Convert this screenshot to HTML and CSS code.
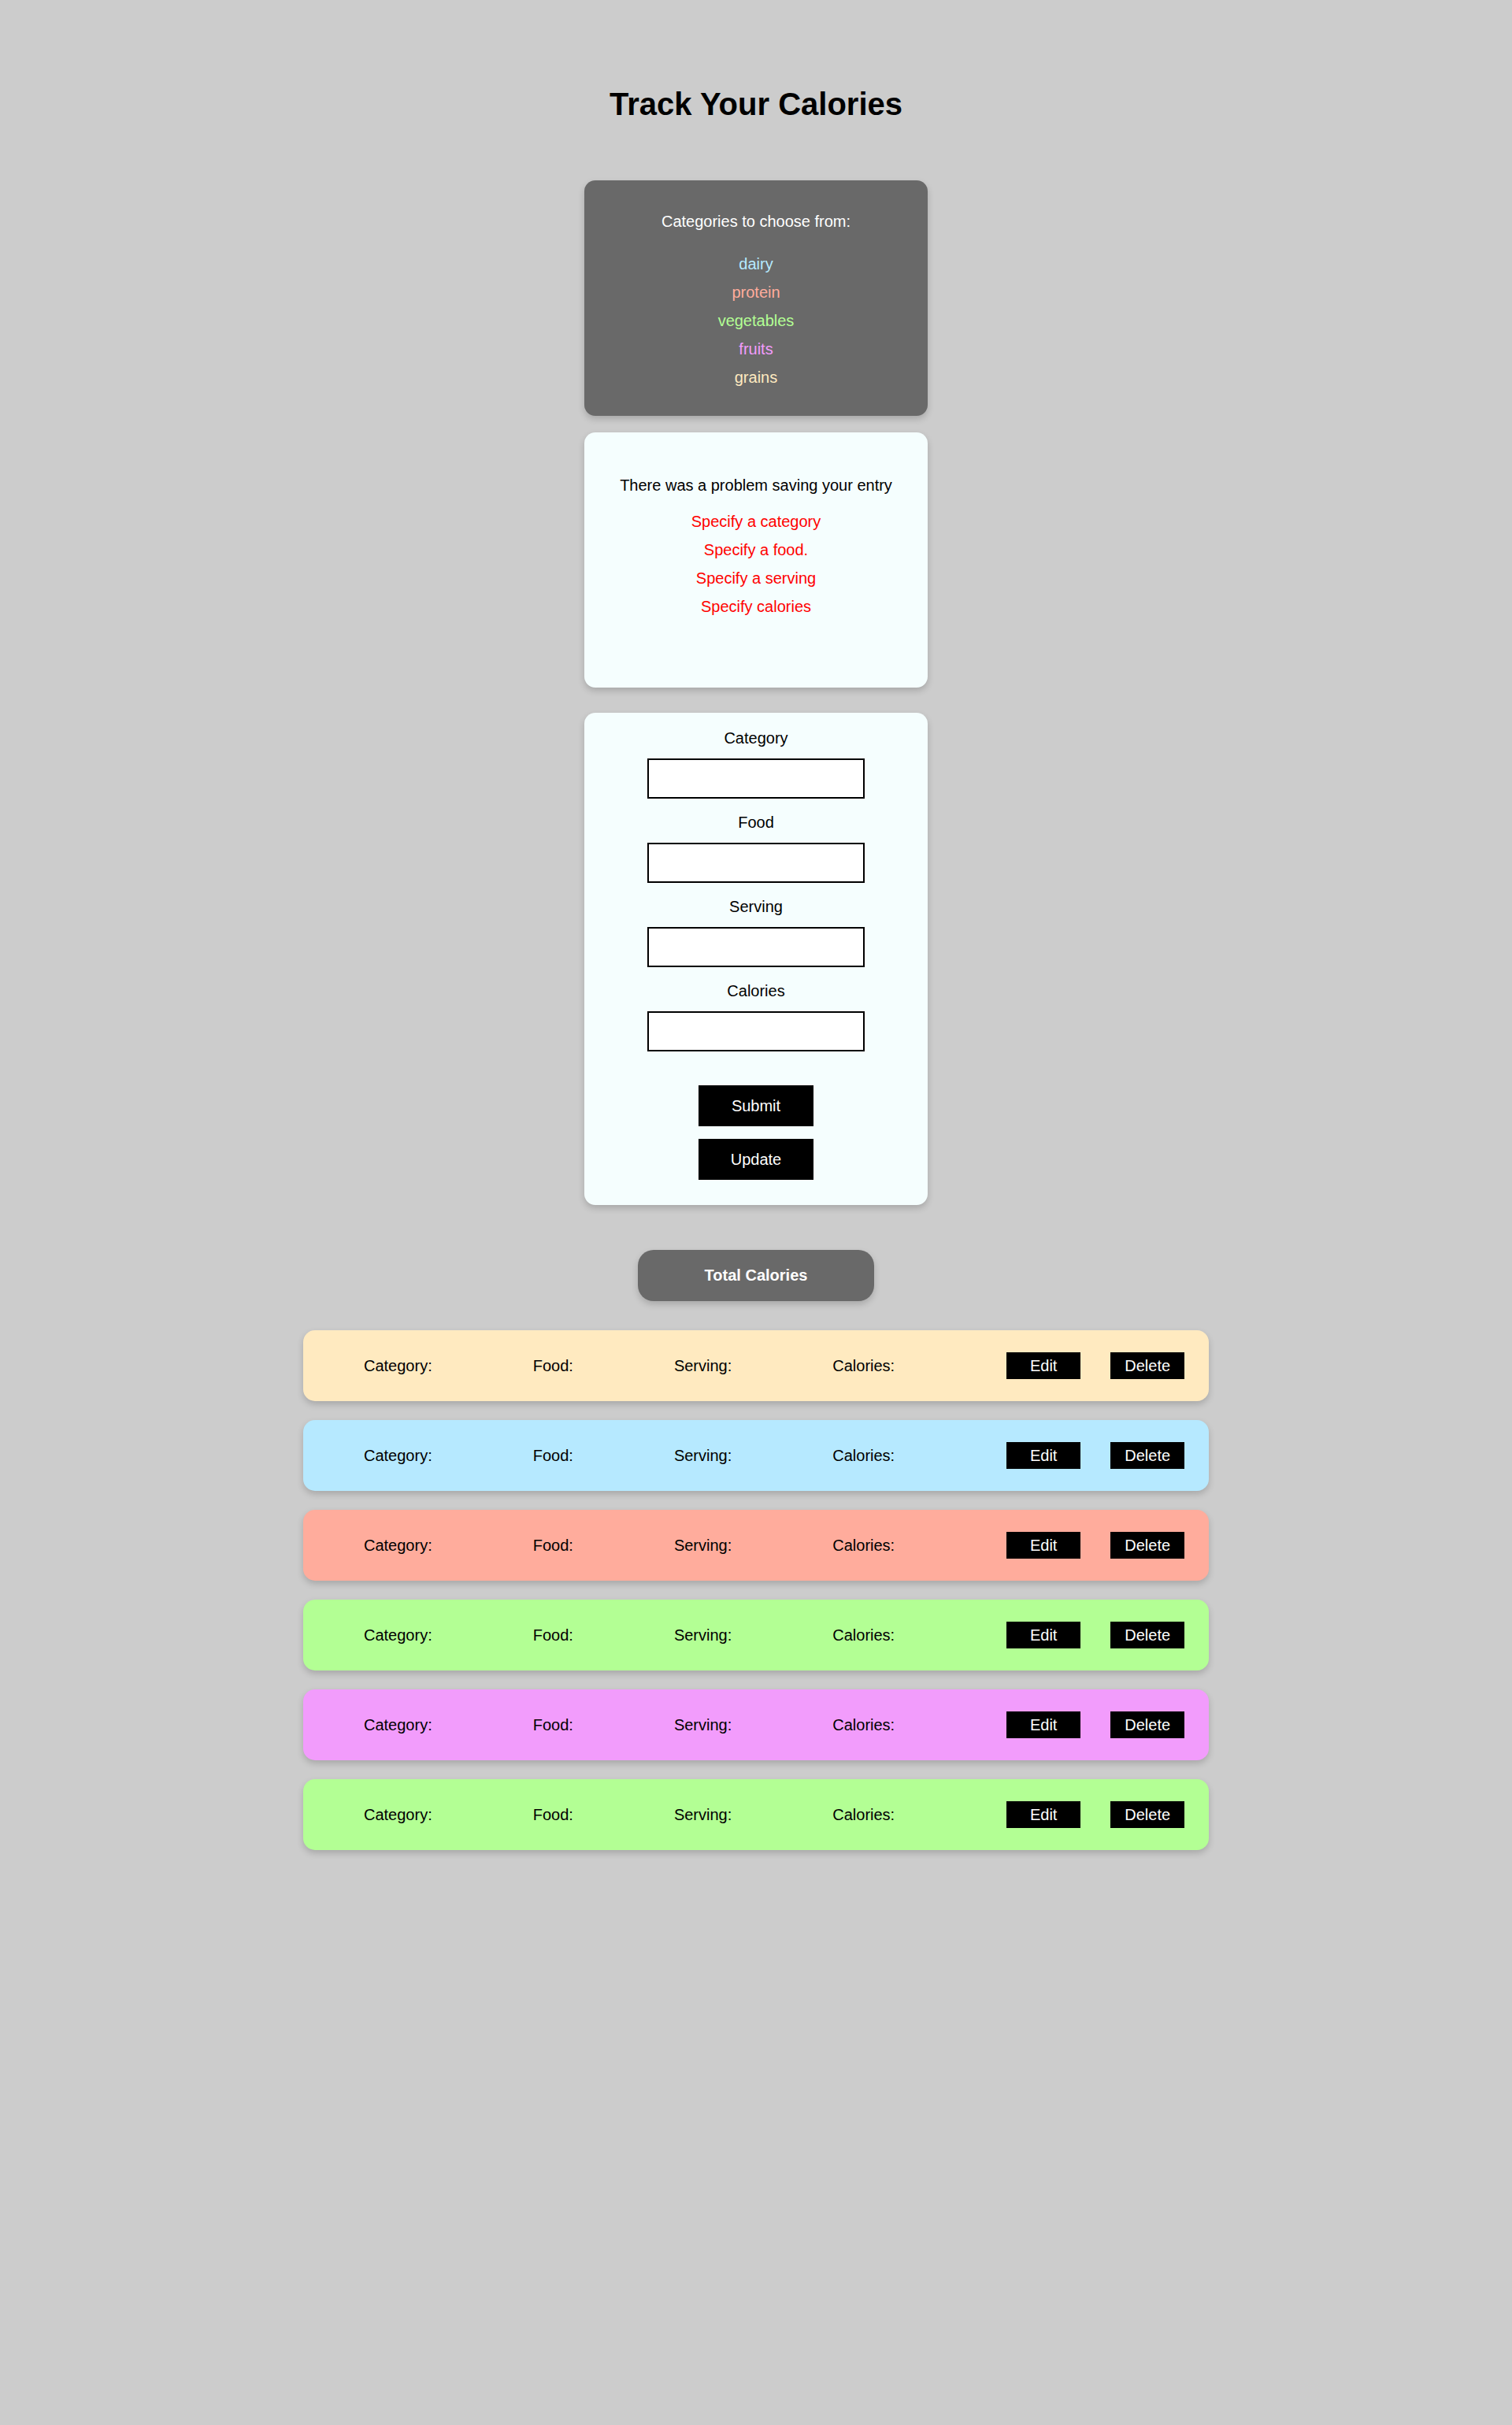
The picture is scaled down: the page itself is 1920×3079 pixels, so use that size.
FILE: index.html
```html
<!DOCTYPE html>
<html lang="en">
<head>
    <meta charset="UTF-8">
    <meta name="viewport" content="width=device-width, initial-scale=1.0">
    <title>Calorie Tracker</title>
    <link rel="stylesheet" href="styles.css">
</head>
<body>
    <h1 class="title">Track Your Calories</h1>

    <div class="card categories">
        <p class="card-heading">Categories to choose from:</p>
        <ul class="category-list">
            <li class="dairy-text">dairy</li>
            <li class="protein-text">protein</li>
            <li class="vegetables-text">vegetables</li>
            <li class="fruits-text">fruits</li>
            <li class="grains-text">grains</li>
        </ul>
    </div>

    <div class="card errors">
        <p class="card-heading">There was a problem saving your entry</p>
        <ul class="error-list">
            <li>Specify a category</li>
            <li>Specify a food.</li>
            <li>Specify a serving</li>
            <li>Specify calories</li>
        </ul>
    </div>

    <form class="card entry-form" id="entryForm">
        <label for="category">Category</label>
        <input type="text" id="category" name="category">

        <label for="food">Food</label>
        <input type="text" id="food" name="food">

        <label for="serving">Serving</label>
        <input type="text" id="serving" name="serving">

        <label for="calories">Calories</label>
        <input type="text" id="calories" name="calories">

        <button type="submit" class="form-btn submit-btn">Submit</button>
        <button type="button" class="form-btn">Update</button>
    </form>

    <div class="total">Total Calories</div>

    <div class="entries">
        <div class="entry grains">
            <span>Category:</span>
            <span>Food:</span>
            <span>Serving:</span>
            <span>Calories:</span>
            <div class="actions">
                <button class="row-btn">Edit</button>
                <button class="row-btn">Delete</button>
            </div>
        </div>
        <div class="entry dairy">
            <span>Category:</span>
            <span>Food:</span>
            <span>Serving:</span>
            <span>Calories:</span>
            <div class="actions">
                <button class="row-btn">Edit</button>
                <button class="row-btn">Delete</button>
            </div>
        </div>
        <div class="entry protein">
            <span>Category:</span>
            <span>Food:</span>
            <span>Serving:</span>
            <span>Calories:</span>
            <div class="actions">
                <button class="row-btn">Edit</button>
                <button class="row-btn">Delete</button>
            </div>
        </div>
        <div class="entry vegetables">
            <span>Category:</span>
            <span>Food:</span>
            <span>Serving:</span>
            <span>Calories:</span>
            <div class="actions">
                <button class="row-btn">Edit</button>
                <button class="row-btn">Delete</button>
            </div>
        </div>
        <div class="entry fruits">
            <span>Category:</span>
            <span>Food:</span>
            <span>Serving:</span>
            <span>Calories:</span>
            <div class="actions">
                <button class="row-btn">Edit</button>
                <button class="row-btn">Delete</button>
            </div>
        </div>
        <div class="entry vegetables">
            <span>Category:</span>
            <span>Food:</span>
            <span>Serving:</span>
            <span>Calories:</span>
            <div class="actions">
                <button class="row-btn">Edit</button>
                <button class="row-btn">Delete</button>
            </div>
        </div>
    </div>
</body>
</html>
```

FILE: styles.css
```css
body {
    margin: 0;
    padding-bottom: 40px;
    background-color: #cccccc;
    font-family: "Liberation Sans", Arial, sans-serif;
    font-size: 20px;
    line-height: 24px;
    color: #000;
    text-align: center;
}
.title {
    margin: 108px 0 73px;
    font-size: 40px;
    line-height: 48px;
    font-weight: bold;
}
.card {
    width: 436px;
    margin: 0 auto;
    box-sizing: border-box;
    border-radius: 14px;
    box-shadow: 0 4px 8px rgba(0, 0, 0, 0.18);
}
.card-heading {
    margin: 0;
}
ul {
    list-style: none;
    margin: 0;
    padding: 0;
}
li {
    line-height: 36px;
}

/* categories box */
.categories {
    background: #696969;
    color: #fff;
    padding: 40px 0 31px;
}
.category-list {
    margin-top: 24px;
}
.dairy-text { color: #b6e9ff; }
.protein-text { color: #ffac9c; }
.vegetables-text { color: #b3ff94; }
.fruits-text { color: #f29cfc; }
.grains-text { color: #ffeac0; }

/* error box */
.errors {
    margin-top: 21px;
    background: #f5fefe;
    padding: 55px 0 85px;
}
.error-list {
    margin-top: 16px;
    color: red;
}

/* form */
.entry-form {
    margin-top: 32px;
    background: #f5fefe;
    padding: 20px 0 32px;
    display: flex;
    flex-direction: column;
    align-items: center;
}
.entry-form label {
    margin-bottom: 14px;
}
.entry-form input {
    width: 276px;
    height: 51px;
    box-sizing: border-box;
    margin: 0 0 18px;
    border: 2px solid #000;
    background: #fff;
    font-size: 20px;
}
.form-btn {
    width: 146px;
    height: 52px;
    margin-top: 16px;
    border: none;
    background: #000;
    color: #fff;
    font-family: inherit;
    font-size: 20px;
}
.submit-btn {
    margin-top: 25px;
}

/* totals */
.total {
    width: 300px;
    height: 65px;
    margin: 57px auto 37px;
    border-radius: 20px;
    background: #696969;
    color: #fff;
    font-weight: bold;
    line-height: 65px;
    box-shadow: 0 4px 8px rgba(0, 0, 0, 0.18);
}

/* entries list */
.entries {
    display: flex;
    flex-direction: column;
    align-items: center;
    gap: 24px;
}
.entry {
    width: 1150px;
    height: 90px;
    box-sizing: border-box;
    padding: 0 31px 0 77px;
    display: flex;
    align-items: center;
    gap: 128px;
    border-radius: 15px;
    box-shadow: 0 4px 8px rgba(0, 0, 0, 0.18);
}
.actions {
    display: flex;
    gap: 38px;
    margin-left: 14px;
}
.row-btn {
    width: 94px;
    height: 34px;
    border: none;
    background: #000;
    color: #fff;
    font-family: inherit;
    font-size: 20px;
    padding: 0;
}
.grains { background: #ffeac0; }
.dairy { background: #b6e9ff; }
.protein { background: #ffac9c; }
.vegetables { background: #b3ff94; }
.fruits { background: #f29cfc; }
```
